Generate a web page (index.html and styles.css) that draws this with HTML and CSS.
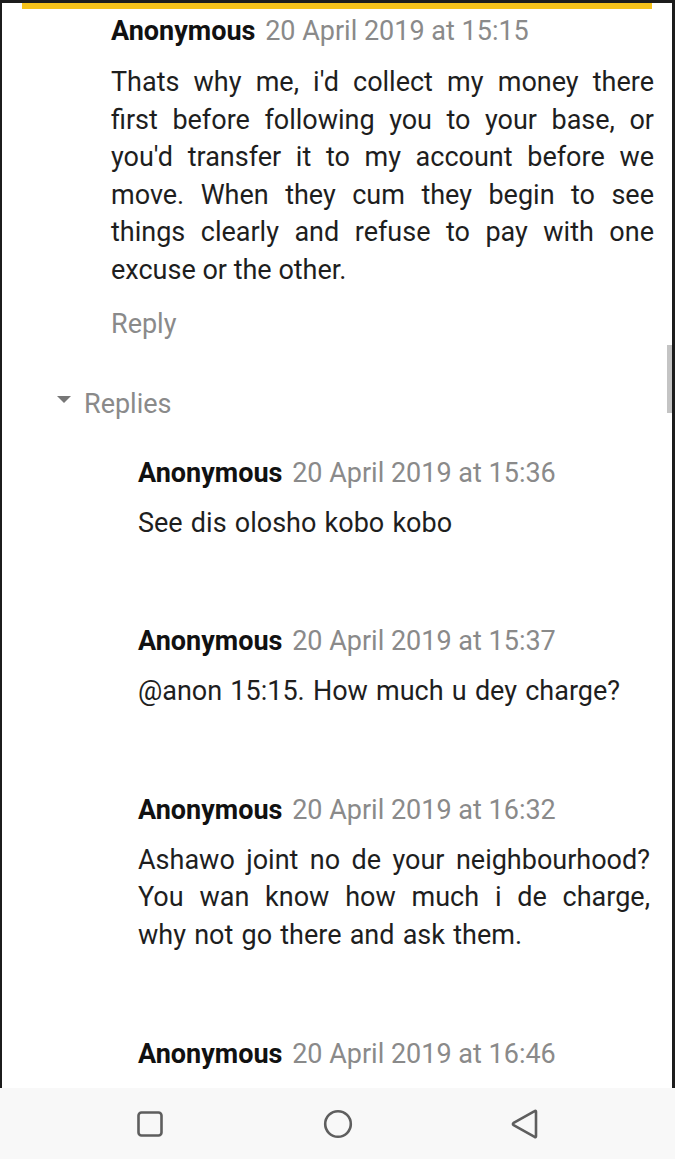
FILE: index.html
```html
<!DOCTYPE html>
<html>
<head>
<meta charset="utf-8">
<link rel="stylesheet" href="styles.css">
</head>
<body>
<div class="page">
  <div class="topline"></div>
  <div class="accent"></div>
  <div class="comment main">
    <div class="head"><span class="author">Anonymous</span> <span class="date">20 April 2019 at 15:15</span></div>
    <p class="text">Thats why me, i'd collect my money there first before following you to your base, or you'd transfer it to my account before we move. When they cum they begin to see things clearly and refuse to pay with one excuse or the other.</p>
    <div class="reply">Reply</div>
  </div>
  <div class="replies-toggle"><span class="tri"></span><span>Replies</span></div>
  <div class="thread">
    <div class="comment sub">
      <div class="head"><span class="author">Anonymous</span> <span class="date">20 April 2019 at 15:36</span></div>
      <p class="text">See dis olosho kobo kobo</p>
    </div>
    <div class="comment sub">
      <div class="head"><span class="author">Anonymous</span> <span class="date">20 April 2019 at 15:37</span></div>
      <p class="text">@anon 15:15. How much u dey charge?</p>
    </div>
    <div class="comment sub">
      <div class="head"><span class="author">Anonymous</span> <span class="date">20 April 2019 at 16:32</span></div>
      <p class="text">Ashawo joint no de your neighbourhood? You wan know how much i de charge, why not go there and ask them.</p>
    </div>
    <div class="comment sub">
      <div class="head"><span class="author">Anonymous</span> <span class="date">20 April 2019 at 16:46</span></div>
    </div>
  </div>
  <div class="scrollbar"></div>
</div>
<div class="navbar">
  <svg class="nav-icon" width="30" height="30" viewBox="0 0 30 30"><rect x="3.5" y="3.5" width="23" height="23" rx="3" fill="none" stroke="#5e5e5e" stroke-width="2.6"/></svg>
  <svg class="nav-icon" width="30" height="30" viewBox="0 0 30 30"><circle cx="15" cy="15" r="12.8" fill="none" stroke="#5e5e5e" stroke-width="2.6"/></svg>
  <svg class="nav-icon" width="30" height="30" viewBox="0 0 30 30"><path d="M26 2.8 L26 27.2 Q26 28.8 24.6 27.9 L3.6 16.2 Q2.4 15 3.6 13.8 L24.6 2.1 Q26 1.2 26 2.8 Z" fill="none" stroke="#5e5e5e" stroke-width="2.6" stroke-linejoin="round"/></svg>
</div>
</body>
</html>
```

FILE: styles.css
```css
html, body {
  margin: 0;
  padding: 0;
  background: #ffffff;
}
body {
  width: 675px;
  height: 1159px;
  overflow: hidden;
  font-family: Roboto, "Liberation Sans", sans-serif;
}
.page {
  position: relative;
  height: 1088px;
  box-sizing: border-box;
  border-left: 2px solid #1c1c1c;
  border-right: 3px solid #1c1c1c;
  background: #ffffff;
  overflow: hidden;
}
.topline {
  height: 3px;
  background: #1c1c1c;
}
.accent {
  height: 6px;
  margin: 0 20px 0 20px;
  background: #f6c21a;
}
.comment .head {
  line-height: 36px;
  font-size: 27px;
  white-space: nowrap;
}
.author {
  font-weight: 700;
  color: #111111;
}
.date {
  color: #8a8a8a;
  margin-left: 3px;
}
.text {
  margin: 0;
  font-size: 27px;
  line-height: 37.6px;
  color: #1e1e1e;
  text-align: justify;
}
.main {
  margin: 4px 18px 0 109px;
}
.main .text {
  margin-top: 15px;
}
.reply {
  margin-top: 16px;
  font-size: 27px;
  line-height: 36px;
  color: #8a8a8a;
}
.replies-toggle {
  margin: 44px 0 0 55px;
  display: flex;
  align-items: center;
  gap: 13px;
  font-size: 27px;
  line-height: 36px;
  color: #8a8a8a;
}
.tri {
  width: 0;
  height: 0;
  border-left: 7px solid transparent;
  border-right: 7px solid transparent;
  border-top: 7px solid #777777;
  margin-top: -8px;
}
.thread {
  margin: 33px 22px 0 136px;
}
.sub {
  margin-bottom: 81px;
}
.sub .text {
  margin-top: 14px;
  word-spacing: 1.5px;
}
.scrollbar {
  position: absolute;
  right: 0;
  top: 345px;
  width: 5px;
  height: 68px;
  background: #c4c4c4;
}
.navbar {
  height: 71px;
  background: #f8f8f8;
  display: flex;
  align-items: center;
  justify-content: space-between;
  padding: 0 135px 0 135px;
}
.nav-icon {
  display: block;
}
```
